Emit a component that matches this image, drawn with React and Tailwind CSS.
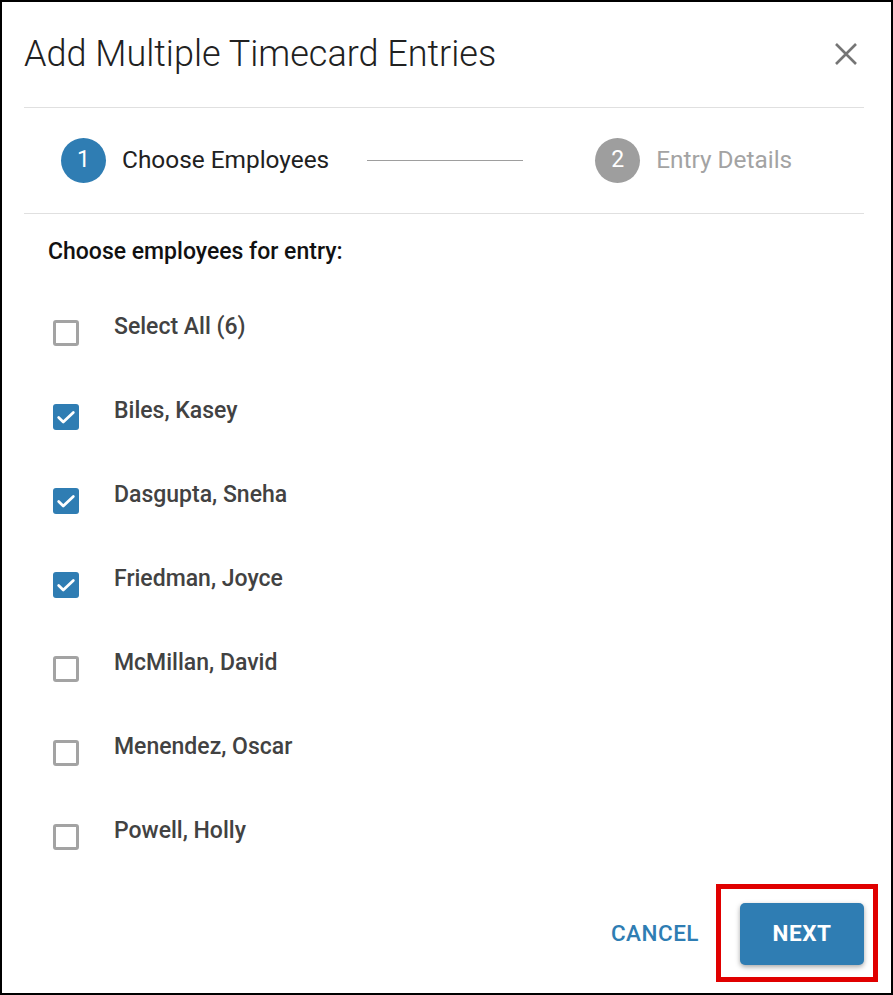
import React from "react";

const employees = [
  { name: "Select All (6)", checked: false },
  { name: "Biles, Kasey", checked: true },
  { name: "Dasgupta, Sneha", checked: true },
  { name: "Friedman, Joyce", checked: true },
  { name: "McMillan, David", checked: false },
  { name: "Menendez, Oscar", checked: false },
  { name: "Powell, Holly", checked: false },
];

function Checkbox({ checked }) {
  if (checked) {
    return (
      <div className="w-[26px] h-[26px] rounded-[3px] bg-[#2f7db3] flex items-center justify-center">
        <svg width="22" height="22" viewBox="0 0 24 24" fill="none">
          <path d="M4 12.5l5 5L20 7" stroke="white" strokeWidth="3" strokeLinecap="round" strokeLinejoin="round" />
        </svg>
      </div>
    );
  }
  return <div className="w-[26px] h-[26px] rounded-[3px] border-[3px] border-[#a3a3a3] bg-white" />;
}

export default function App() {
  return (
    <div
      className="relative w-[893px] h-[995px] border-2 border-black bg-white pl-[22px] pr-[27px] flex flex-col"
      style={{ fontFamily: "Roboto, 'Liberation Sans', sans-serif" }}
    >
      {/* Header */}
      <div className="h-[106px] flex items-center justify-between border-b border-[#e0e0e0] shrink-0">
        <h1 className="text-[36px] font-light text-[#212121] leading-none -mt-[2px]">Add Multiple Timecard Entries</h1>
        <svg width="24" height="24" viewBox="0 0 24 24" className="mr-[6px] -mt-[2px]">
          <path d="M2 2L22 22M22 2L2 22" stroke="#757575" strokeWidth="2.6" />
        </svg>
      </div>

      {/* Stepper */}
      <div className="h-[106px] flex items-center border-b border-[#e0e0e0] pl-[37px] shrink-0">
        <div className="w-[45px] h-[45px] rounded-full bg-[#2f7db3] text-white text-[23px] flex items-center justify-center">1</div>
        <span className="ml-[16px] text-[24.4px] text-[#212121]">Choose Employees</span>
        <div className="ml-[38px] w-[156px] h-px bg-[#9e9e9e]" />
        <div className="ml-[72px] w-[45px] h-[45px] rounded-full bg-[#9e9e9e] text-white text-[23px] flex items-center justify-center">2</div>
        <span className="ml-[16px] text-[24.4px] text-[#a3a3a3]">Entry Details</span>
      </div>

      {/* Body */}
      <div className="pl-[24px] pt-[24px]">
        <div className="text-[23px] font-medium leading-[28px] text-[#111]">Choose employees for entry:</div>
        <div className="mt-[19px] flex flex-col">
          {employees.map((e) => (
            <div key={e.name} className="h-[84px] flex items-start pt-[28px]">
              <div className="ml-[5px] mt-[7px]">
                <Checkbox checked={e.checked} />
              </div>
              <span className="ml-[35px] text-[23px] font-medium leading-[28px] text-[#424242]">{e.name}</span>
            </div>
          ))}
        </div>
      </div>

      {/* Footer */}
      <div className="mt-[30px] flex items-center justify-end">
        <button className="text-[22.5px] font-medium text-[#2f7db3] tracking-[0.5px] mr-[41px]">CANCEL</button>
        <button className="w-[124px] h-[62px] rounded-[5px] bg-[#2f7db3] text-white text-[22.5px] font-bold tracking-[0.5px] shadow-[0_2px_5px_rgba(0,0,0,0.35)]">
          NEXT
        </button>
      </div>

      {/* Highlight */}
      <div className="absolute left-[714px] top-[882px] w-[162px] h-[98px] border-[5px] border-[#e00000]" />
    </div>
  );
}
